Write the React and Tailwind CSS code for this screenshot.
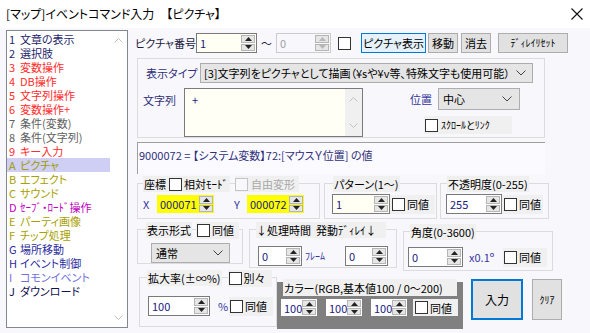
import React from 'react';

const items = [
  ['1', '文章の表示', 'text-[#1f1f6b]'],
  ['2', '選択肢', 'text-[#1f1f6b]'],
  ['3', '変数操作', 'text-[#ff2b2b]'],
  ['4', 'DB操作', 'text-[#ff2b2b]'],
  ['5', '文字列操作', 'text-[#ff2b2b]'],
  ['6', '変数操作+', 'text-[#ff2b2b]'],
  ['7', '条件(変数)', 'text-[#606060]'],
  ['8', '条件(文字列)', 'text-[#606060]'],
  ['9', 'キー入力', 'text-[#ff2b2b]'],
  ['A', 'ピクチャ', 'text-[#a09a00]'],
  ['B', 'エフェクト', 'text-[#a8a000]'],
  ['C', 'サウンド', 'text-[#a8a000]'],
  ['D', 'ｾｰﾌﾞ・ﾛｰﾄﾞ操作', 'text-[#c000c0]'],
  ['E', 'パーティ画像', 'text-[#a8a000]'],
  ['F', 'チップ処理', 'text-[#a8a000]'],
  ['G', '場所移動', 'text-[#2a2aa0]'],
  ['H', 'イベント制御', 'text-[#2a2aa0]'],
  ['I', 'コモンイベント', 'text-[#7070e0]'],
  ['J', 'ダウンロード', 'text-[#101050]'],
];

const Check = ({ off }) => (
  <span
    className={
      off
        ? 'block w-[13px] h-[13px] border border-[#c4c4c4] bg-[#f8f8fc] shrink-0'
        : 'block w-[13px] h-[13px] border border-[#333333] bg-white shrink-0'
    }
  />
);

const Tri = ({ down, off }) => (
  <svg width="7" height="4" viewBox="0 0 7 4">
    <path d={down ? 'M0 0 L7 0 L3.5 4Z' : 'M0 4 L3.5 0 L7 4Z'} fill={off ? '#b8b8b8' : '#222'} />
  </svg>
);

const Spin = ({ off }) => (
  <div className="w-[15px] shrink-0 flex flex-col gap-[1px] py-[1px] pr-[1px]">
    <div className="flex-1 bg-[#e6e6e6] border border-[#b5b5b5] flex items-center justify-center">
      <Tri off={off} />
    </div>
    <div className="flex-1 bg-[#e6e6e6] border border-[#b5b5b5] flex items-center justify-center">
      <Tri down off={off} />
    </div>
  </div>
);

const SpinInput = ({ value, box, text = 'text-[#202080]' }) => (
  <div className={'flex shrink-0 border ' + box}>
    <span className={'flex-1 pl-[3px] flex items-center ' + text}>{value}</span>
    <Spin />
  </div>
);

const Chevron = () => (
  <svg width="10" height="6" viewBox="0 0 10 6">
    <path d="M0.5 0.5 L5 5 L9.5 0.5" fill="none" stroke="#444" strokeWidth="1" />
  </svg>
);

const Btn = ({ children, cls }) => (
  <div className={'flex items-center justify-center shrink-0 whitespace-nowrap text-black ' + cls}>{children}</div>
);

export default function App() {
  return (
    <div className="w-[590px] h-[333px] overflow-hidden bg-[#f8f8fc] text-[11px] leading-[14px] text-[#1e1e50] whitespace-nowrap font-['Noto_Sans_CJK_JP',sans-serif] [font-feature-settings:'palt']">
      <div className="h-[28px] bg-white flex items-center justify-between pl-[6px] pr-[7px] text-[12px] text-black">
        <span>[マップ]イベントコマンド入力　【ピクチャ】</span>
        <svg width="12" height="12" viewBox="0 0 12 12">
          <path d="M0.5 0.5 L11.5 11.5 M11.5 0.5 L0.5 11.5" stroke="#111" strokeWidth="1.1" />
        </svg>
      </div>

      <div className="flex pt-[2px]">
        {/* command list */}
        <div className="ml-[6px] w-[122px] h-[298px] border border-[#828790] bg-white flex shrink-0">
          <div className="flex-1 pt-[1px]">
            {items.map(([k, label, color]) => (
              <div
                key={k}
                className={
                  (k === 'A' ? 'bg-[#cfcff5] ' : '') + 'h-[14px] pl-[2px] flex items-center leading-[12px] ' + color
                }
              >
                <span className="w-[11px] shrink-0">{k}</span>
                <span>{label}</span>
              </div>
            ))}
          </div>
          <div className="w-[17px] flex flex-col justify-between items-center py-[7px]">
            <svg width="9" height="5" viewBox="0 0 9 5">
              <path d="M0.5 4.5 L4.5 0.5 L8.5 4.5" fill="none" stroke="#c0c0c0" />
            </svg>
            <svg width="9" height="5" viewBox="0 0 9 5">
              <path d="M0.5 0.5 L4.5 4.5 L8.5 0.5" fill="none" stroke="#c0c0c0" />
            </svg>
          </div>
        </div>

        {/* right side */}
        <div className="ml-[7px] flex flex-col">
          {/* picture number row */}
          <div className="mt-[3px] h-[20px] flex items-center">
            <span className="w-[61px] shrink-0 text-[#1a1a40]">ピクチャ番号</span>
            <SpinInput value="1" box="w-[61px] h-[20px] border-[#7a7a7a] bg-[#fffff4]" />
            <span className="w-[19px] text-center text-[#1a1a40]">～</span>
            <div className="flex w-[55px] h-[20px] border border-[#cccccc] bg-[#f8f8fc]">
              <span className="flex-1 pl-[3px] flex items-center text-[#a0a0a0]">0</span>
              <Spin off />
            </div>
            <div className="ml-[7px]"><Check /></div>
            <Btn cls="ml-[10px] w-[65px] h-[20px] border border-[#0078d7] bg-[#e5f1fb]">ピクチャ表示</Btn>
            <Btn cls="ml-[2px] w-[30px] h-[20px] border border-[#adadad] bg-[#e1e1e1]">移動</Btn>
            <Btn cls="ml-[3px] w-[30px] h-[20px] border border-[#adadad] bg-[#e1e1e1]">消去</Btn>
            <Btn cls="ml-[7px] w-[70px] h-[20px] border border-[#adadad] bg-[#e1e1e1] text-[10px]">ﾃﾞｨﾚｲﾘｾｯﾄ</Btn>
          </div>

          {/* display type group */}
          <div className="mt-[5px] ml-[2px] w-[408px] h-[80px] border border-[#dcdcdc]">
            <div className="mt-[4px] flex items-center">
              <span className="ml-[8px] w-[54px] text-[#30307a]">表示タイプ</span>
              <div className="w-[333px] h-[20px] border border-[#adadad] bg-[#e5e5e5] flex items-center justify-between pl-[3px] pr-[6px] text-black overflow-hidden">
                <span>[3]文字列をピクチャとして描画（¥sや¥v等、特殊文字も使用可能）</span>
                <Chevron />
              </div>
            </div>
            <div className="mt-[5px] flex items-start">
              <span className="ml-[5px] mt-[5px] w-[41px] text-[#30307a]">文字列</span>
              <div className="w-[179px] h-[49px] border border-[#7a7a7a] bg-[#fffff6] flex">
                <span className="flex-1 pl-[7px] pt-[4px] text-[#202080]">+</span>
                <div className="w-[17px] bg-[#f0f0f0] flex flex-col justify-between items-center py-[8px]">
                  <svg width="9" height="5" viewBox="0 0 9 5">
                    <path d="M0.5 4.5 L4.5 0.5 L8.5 4.5" fill="none" stroke="#c0c0c0" />
                  </svg>
                  <svg width="9" height="5" viewBox="0 0 9 5">
                    <path d="M0.5 0.5 L4.5 4.5 L8.5 0.5" fill="none" stroke="#c0c0c0" />
                  </svg>
                </div>
              </div>
              <div className="ml-[47px] flex flex-col">
                <div className="flex items-center">
                  <span className="w-[28px] text-[#3535a0]">位置</span>
                  <div className="w-[82px] h-[22px] border border-[#adadad] bg-[#e5e5e5] flex items-center justify-between pl-[4px] pr-[7px] text-black">
                    <span>中心</span>
                    <Chevron />
                  </div>
                </div>
                <div className="mt-[6px] ml-[14px] w-[88px] h-[18px] bg-[#f0f0f0] flex items-center gap-[3px] pl-[1px] text-[10px] text-black">
                  <Check />
                  <span>ｽｸﾛｰﾙとﾘﾝｸ</span>
                </div>
              </div>
            </div>
          </div>

          {/* info line */}
          <div className="mt-[4px] ml-[2px] w-[408px] h-[32px] border-t border-l border-[#a0a0a0] bg-[#fbfbff] pl-[1px] pt-[5px] text-[#30307a]">
            9000072 = 【システム変数】72:[マウスＹ位置] の値
          </div>

          {/* coordinates / pattern / opacity */}
          <div className="mt-[9px] flex items-start">
            <div className="ml-[2px] w-[183px] h-[36px] border border-[#dcdcdc]">
              <div className="-mt-[8px] ml-[5px] h-[16px] flex items-center">
                <div className="h-[16px] bg-[#f0f0f0] flex items-center gap-[2px] pr-[2px] text-black">
                  <span className="w-[24px] pl-[1px]">座標</span>
                  <Check />
                  <span>相対ﾓｰﾄﾞ</span>
                </div>
                <div className="ml-[5px] h-[16px] bg-[#f0f0f0] flex items-center gap-[3px] pr-[4px] text-[#a8a8a8]">
                  <Check off />
                  <span>自由変形</span>
                </div>
              </div>
              <div className="mt-[2px] flex items-center">
                <span className="ml-[5px] w-[13px] text-[#3535a0]">X</span>
                <SpinInput value="000071" box="w-[59px] h-[20px] border-[#f8f8fc] bg-[#ffff00]" />
                <span className="ml-[19px] w-[12px] text-[#3535a0]">Y</span>
                <SpinInput value="000072" box="w-[59px] h-[20px] border-[#f8f8fc] bg-[#ffff00]" />
              </div>
            </div>

            <div className="ml-[4px] w-[113px] h-[36px] border border-[#dcdcdc]">
              <div className="-mt-[8px] ml-[8px] h-[16px] flex items-center">
                <span className="h-[16px] bg-[#f0f0f0] px-[1px] flex items-center text-black">パターン(1～)</span>
              </div>
              <div className="mt-[2px] flex items-center">
                <SpinInput value="1" box="ml-[7px] w-[58px] h-[20px] border-[#7a7a7a] bg-[#fffff4]" />
                <div className="w-[45px] h-[19px] bg-[#f0f0f0] flex items-center gap-[2px] pl-[2px] text-black">
                  <Check />
                  <span>同値</span>
                </div>
              </div>
            </div>

            <div className="ml-[3px] w-[109px] h-[36px] border border-[#dcdcdc]">
              <div className="-mt-[8px] ml-[6px] h-[16px] flex items-center">
                <span className="h-[16px] bg-[#f0f0f0] px-[1px] flex items-center text-black">不透明度(0-255)</span>
              </div>
              <div className="mt-[2px] flex items-center">
                <SpinInput value="255" box="ml-[5px] w-[56px] h-[20px] border-[#7a7a7a] bg-white" />
                <div className="w-[41px] h-[19px] bg-[#f0f0f0] flex items-center gap-[2px] pl-[2px] text-black">
                  <Check />
                  <span>同値</span>
                </div>
              </div>
            </div>
          </div>

          {/* display mode / timing / angle */}
          <div className="mt-[10px] flex items-start">
            <div className="ml-[2px] w-[106px] h-[35px] border border-[#dcdcdc]">
              <div className="-mt-[8px] ml-[8px] h-[16px] flex items-center">
                <span className="h-[16px] bg-[#f0f0f0] px-[1px] flex items-center text-black">表示形式</span>
                <div className="ml-[4px] w-[43px] h-[17px] bg-[#f0f0f0] flex items-center gap-[2px] pl-[1px] text-black">
                  <Check />
                  <span>同値</span>
                </div>
              </div>
              <div className="mt-[5px] ml-[13px] w-[79px] h-[20px] border border-[#adadad] bg-[#e5e5e5] flex items-center justify-between pl-[4px] pr-[6px] text-black">
                <span>通常</span>
                <Chevron />
              </div>
            </div>

            <div className="ml-[6px] w-[148px] h-[39px] border border-[#dcdcdc]">
              <div className="-mt-[8px] ml-[6px] h-[16px] flex items-center">
                <span className="h-[16px] w-[130px] bg-[#f0f0f0] flex items-center text-black">
                  ↓処理時間&nbsp;&nbsp;発動ﾃﾞｨﾚｲ↓
                </span>
              </div>
              <div className="mt-[8px] flex items-center">
                <SpinInput value="0" box="ml-[8px] w-[44px] h-[20px] border-[#7a7a7a] bg-white" />
                <span className="ml-[3px] w-[40px] text-[10px] text-[#3535a0]">ﾌﾚｰﾑ</span>
                <SpinInput value="0" box="w-[43px] h-[20px] border-[#7a7a7a] bg-white" />
              </div>
            </div>

            <div className="ml-[6px] mt-[2px] w-[150px] h-[40px] border border-[#dcdcdc]">
              <div className="-mt-[8px] ml-[6px] h-[16px] flex items-center">
                <span className="h-[16px] bg-[#f0f0f0] px-[1px] flex items-center text-black">角度(0-3600)</span>
              </div>
              <div className="mt-[7px] flex items-center">
                <SpinInput value="0" box="ml-[4px] w-[55px] h-[20px] border-[#7a7a7a] bg-white" />
                <span className="ml-[6px] w-[34px] text-[#3535a0]">x0.1º</span>
                <div className="w-[44px] h-[19px] bg-[#f0f0f0] flex items-center gap-[2px] pl-[1px] text-black">
                  <Check />
                  <span>同値</span>
                </div>
              </div>
            </div>
          </div>

          {/* scale / color / buttons */}
          <div className="mt-[6px] flex items-start">
            <div className="ml-[4px] w-[138px] h-[50px] border border-[#dcdcdc]">
              <div className="-mt-[8px] ml-[7px] h-[16px] flex items-center">
                <span className="h-[16px] bg-[#f0f0f0] px-[1px] flex items-center text-black">拡大率(±∞%)</span>
                <div className="ml-[6px] w-[44px] h-[17px] bg-[#f0f0f0] flex items-center gap-[2px] pl-[1px] text-black">
                  <Check />
                  <span>別々</span>
                </div>
              </div>
              <div className="mt-[10px] flex items-center">
                <SpinInput value="100" box="ml-[8px] w-[62px] h-[20px] border-[#7a7a7a] bg-white" />
                <span className="ml-[8px] w-[11px] text-[#3535a0]">%</span>
                <div className="w-[44px] h-[19px] bg-[#f0f0f0] flex items-center gap-[2px] pl-[1px] text-black">
                  <Check />
                  <span>同値</span>
                </div>
              </div>
            </div>

            <div className="mt-[5px] w-[186px] h-[47px] bg-[#808080] shrink-0">
              <div className="-mt-[3px] ml-[6px] w-[174px] h-[17px] bg-[#f0f0f0] flex items-center pl-[1px] text-black">
                カラー(RGB,基本値100 / 0～200)
              </div>
              <div className="mt-[2px] flex items-center">
                <SpinInput value="100" box="ml-[3px] w-[38px] h-[19px] border-[#808080] bg-white" />
                <SpinInput value="100" box="ml-[7px] w-[38px] h-[19px] border-[#808080] bg-white" />
                <SpinInput value="100" box="ml-[7px] w-[38px] h-[19px] border-[#808080] bg-white" />
                <div className="ml-[5px] w-[45px] h-[17px] bg-[#f0f0f0] flex items-center gap-[2px] pl-[2px] text-black">
                  <Check />
                  <span>同値</span>
                </div>
              </div>
            </div>

            <Btn cls="ml-[8px] mt-[2px] w-[52px] h-[41px] border-2 border-[#0078d7] bg-[#e1e1e1] text-[12px]">入力</Btn>
            <Btn cls="ml-[9px] mt-[2px] w-[30px] h-[41px] border border-[#adadad] bg-[#e1e1e1] text-[10px]">ｸﾘｱ</Btn>
          </div>
        </div>
      </div>
    </div>
  );
}
